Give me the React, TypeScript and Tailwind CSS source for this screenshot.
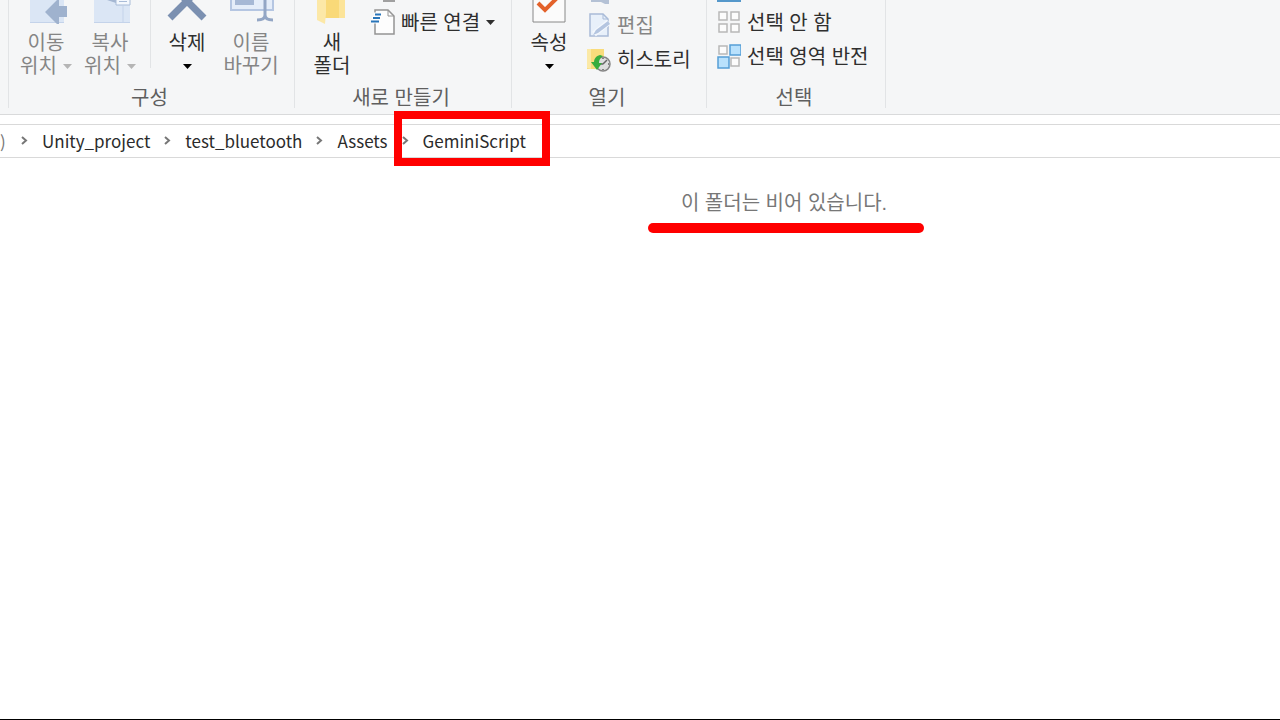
import type { ReactNode } from 'react'

interface BigButtonProps {
  icon: ReactNode
  lines: string[]
  arrow?: boolean
  disabled?: boolean
}

interface RowButtonProps {
  icon: ReactNode
  label: string
  arrow?: boolean
  disabled?: boolean
}

interface GroupProps {
  label: string
  width: string
  children: ReactNode
}

const path = ['Unity_project', 'test_bluetooth', 'Assets', 'GeminiScript']

function Caret() {
  return (
    <svg className="shrink-0" width="9" height="5" viewBox="0 0 9 5" fill="currentColor" aria-hidden="true">
      <path d="M0 0h9L4.5 5z" />
    </svg>
  )
}

function Chevron() {
  return (
    <svg className="shrink-0" width="7" height="9" viewBox="0 0 7 9" fill="none" stroke="#777" strokeWidth="2" aria-hidden="true">
      <path d="M1 1l4 3.5L1 8" />
    </svg>
  )
}

/* Large command: icon on top, one or two text lines below */
function BigButton({ icon, lines, arrow, disabled }: BigButtonProps) {
  const tone = disabled ? 'text-[#858585]' : 'text-[#2f2f2f]'
  return (
    <button type="button" disabled={disabled} className={`flex w-16 shrink-0 flex-col items-center ${tone}`}>
      <span className="mb-2 block h-6">{icon}</span>
      <span className="block h-[23px] whitespace-nowrap">{lines[0]}</span>
      <span className="flex h-[23px] items-center justify-center gap-1.5 whitespace-nowrap">
        {lines[1]}
        {arrow && (
          <span className={`flex h-5 items-center ${disabled ? 'text-[#b5b5b5]' : 'text-black'}`}>
            <Caret />
          </span>
        )}
      </span>
    </button>
  )
}

/* Small command: icon and text on one row */
function RowButton({ icon, label, arrow, disabled }: RowButtonProps) {
  const tone = disabled ? 'text-[#858585]' : 'text-[#2f2f2f]'
  return (
    <button type="button" disabled={disabled} className={`flex h-[34px] items-center gap-1.5 whitespace-nowrap ${tone}`}>
      {icon}
      <span className="pt-0.5">{label}</span>
      {arrow && <Caret />}
    </button>
  )
}

function Group({ label, width, children }: GroupProps) {
  return (
    <section aria-label={label} className={`flex h-[108px] shrink-0 flex-col border-r border-[#e2e4e6] ${width}`}>
      <div className="flex h-[87px] shrink-0 items-start pl-[5px]">{children}</div>
      <p className="pr-1 text-center text-[#5f5f5f]">{label}</p>
    </section>
  )
}

function MoveIcon() {
  return (
    <svg width="42" height="24" viewBox="0 0 42 24" aria-hidden="true">
      <path d="M5 0h34v23H5z" fill="#dbe6f5" />
      <path d="M5 22.5h34" stroke="#c4d3ea" />
      <path d="M20 12L32 0h2v6h12v11H34v7h-2z" fill="#9fb2ce" />
    </svg>
  )
}

function CopyIcon() {
  return (
    <svg width="42" height="24" viewBox="0 0 42 24" aria-hidden="true">
      <path d="M5 0h36v23H5z" fill="#dbe6f5" />
      <path d="M5 22.5h36M34 6v16" stroke="#c4d3ea" fill="none" />
      <path d="M18 0h9v3z" fill="#a5b7d2" />
      <path d="M27 -2h14v7H27z" fill="#f4f8fd" stroke="#a9bcd8" />
      <path d="M30 1.5h8" stroke="#a9bcd8" />
    </svg>
  )
}

function DeleteIcon() {
  return (
    <svg width="42" height="24" viewBox="0 0 42 24" aria-hidden="true">
      <path d="M4 18L25 -3M38 18L17 -3" stroke="#7b90b1" strokeWidth="7" />
    </svg>
  )
}

function RenameIcon() {
  return (
    <svg width="46" height="24" viewBox="0 0 46 24" fill="none" aria-hidden="true">
      <path d="M3 -2h42v12H3z" fill="#e5edf9" stroke="#b5c6e2" strokeWidth="2" />
      <path d="M7 0h19v5H7z" fill="#a6b8d5" />
      <path d="M37 -2v18M29 20c5 0 8-1 8-5 0 4 3 5 8 5" stroke="#93a6c5" strokeWidth="3" />
    </svg>
  )
}

function FolderIcon() {
  return (
    <svg width="32" height="24" viewBox="0 0 32 24" aria-hidden="true">
      <path d="M9 0h20v18H9z" fill="#f9d978" />
      <path d="M23 0h6v18h-6z" fill="#fce499" />
      <path d="M1 0h9v13l-1 11-8-4z" fill="#fce8a7" />
    </svg>
  )
}

function PropertiesIcon() {
  return (
    <svg width="34" height="24" viewBox="0 0 34 24" fill="none" aria-hidden="true">
      <path d="M1 -2h32v24H1z" fill="#fbfbfb" stroke="#888" />
      <path d="M6 3l7 7L25 -2" stroke="#e3622b" strokeWidth="4" />
    </svg>
  )
}

function ShortcutIcon() {
  return (
    <svg className="shrink-0" width="24" height="26" viewBox="0 0 24 26" fill="none" aria-hidden="true">
      <path d="M4 1h13l6 6v18H4z" fill="#fdfdfd" stroke="#949494" strokeWidth="1.5" />
      <path d="M17 1v6h6" stroke="#949494" />
      <path d="M3 5.5h8M1 9h8M0 12.5h8" stroke="#fdfdfd" strokeWidth="4" />
      <path d="M4 5.5h6M2 9h7M0 12.5h8" stroke="#2875b9" strokeWidth="2" />
    </svg>
  )
}

function EditIcon() {
  return (
    <svg className="shrink-0" width="24" height="26" viewBox="0 0 24 26" fill="none" aria-hidden="true">
      <path d="M3 2h13l5 5v17H3z" fill="#e8f0fa" stroke="#a9bbd8" strokeWidth="1.5" />
      <path d="M16 2v5h5" stroke="#a9bbd8" />
      <path d="M7 22L22 10" stroke="#f4f8fd" strokeWidth="6" />
      <path d="M6 23l3-5L21 9l2 3-12 9z" fill="#b4c5e0" />
    </svg>
  )
}

function HistoryIcon() {
  return (
    <svg className="shrink-0" width="24" height="26" viewBox="0 0 24 26" fill="none" aria-hidden="true">
      <path d="M0 3h17v20H0z" fill="#f9dc7c" />
      <path d="M0 3h4v20l-4-1z" fill="#fbe9a6" />
      <circle cx="16" cy="18" r="7" fill="#dedede" stroke="#858585" strokeWidth="1.5" />
      <path d="M16 18l4-4M16 18h-4M16 12v1M16 23v1M21 18h1" stroke="#666" strokeWidth="1.5" />
      <path d="M13 9c-4 1-6 4-6 7H4l6 8 5-7h-3c0-3 1-5 4-7z" fill="#38ad3e" />
    </svg>
  )
}

function SelectNoneIcon() {
  return (
    <svg className="shrink-0" width="24" height="24" viewBox="0 0 24 24" fill="#fcfcfc" stroke="#b8b8b8" strokeWidth="1.5" aria-hidden="true">
      <path d="M2 2h8v8H2zM14 2h8v8h-8zM2 14h8v8H2zM14 14h8v8h-8z" />
    </svg>
  )
}

function InvertIcon() {
  return (
    <svg className="shrink-0" width="24" height="26" viewBox="0 0 24 26" strokeWidth="1.5" aria-hidden="true">
      <path d="M2 3h8v8H2zM14 15h8v8h-8z" fill="#fcfcfc" stroke="#b8b8b8" />
      <path d="M13 2h11v10H13zM1 14h11v11H1z" fill="#b9e1fc" stroke="#559fd6" />
    </svg>
  )
}

export default function App() {
  return (
    <div className="flex min-h-screen flex-col overflow-x-hidden border-b border-black bg-white font-['Liberation_Sans','Noto_Sans_CJK_KR',sans-serif] text-[20px] leading-[23px]">
      {/* Ribbon */}
      <header className="flex h-[115px] border-b border-[#d9dadb] bg-[#f5f6f7]">
        <div className="h-[108px] w-[9px] shrink-0 border-r border-[#e2e4e6]" />
        <Group label="구성" width="w-[286px]">
          <BigButton icon={<MoveIcon />} lines={['이동', '위치']} arrow disabled />
          <BigButton icon={<CopyIcon />} lines={['복사', '위치']} arrow disabled />
          <div className="mr-1 ml-2 h-[68px] w-px shrink-0 bg-[#e2e4e6]" />
          <BigButton icon={<DeleteIcon />} lines={['삭제', '']} arrow />
          <BigButton icon={<RenameIcon />} lines={['이름', '바꾸기']} disabled />
        </Group>
        <Group label="새로 만들기" width="w-[217px]">
          <BigButton icon={<FolderIcon />} lines={['새', '폴더']} />
          <div className="ml-[7px]">
            <div className="flex h-[5px] items-start pl-3">
              <div className="h-0.5 w-3 bg-[#a0a0a0]" />
            </div>
            <RowButton icon={<ShortcutIcon />} label="빠른 연결" arrow />
          </div>
        </Group>
        <Group label="열기" width="w-[195px]">
          <BigButton icon={<PropertiesIcon />} lines={['속성', '']} arrow />
          <div className="ml-1.5">
            <div className="flex h-2 items-start pl-1">
              <svg width="18" height="4" viewBox="0 0 18 4" fill="#b4c1d5" aria-hidden="true">
                <path d="M0 0h18v4h-4l-4-2H0z" />
              </svg>
            </div>
            <RowButton icon={<EditIcon />} label="편집" disabled />
            <RowButton icon={<HistoryIcon />} label="히스토리" />
          </div>
        </Group>
        <Group label="선택" width="w-[179px]">
          <div className="ml-[5px]">
            <div className="flex h-[5px] items-start">
              <div className="h-0.5 w-6 bg-[#5598cb]" />
            </div>
            <RowButton icon={<SelectNoneIcon />} label="선택 안 함" />
            <RowButton icon={<InvertIcon />} label="선택 영역 반전" />
          </div>
        </Group>
      </header>

      {/* Address bar */}
      <nav aria-label="경로" className="mt-[9px] flex h-[34px] items-center border-y border-[#d9d9d9] pb-0.5 font-['Noto_Sans_CJK_KR',sans-serif] text-[17px] text-[#2b2b2b]">
        <span className="w-[21px] text-[#777]">)</span>
        <ol className="flex items-center">
          {path.map((name, i) => (
            <li key={name} className="relative flex items-center gap-3.5 pr-3.5">
              <Chevron />
              <a href="#">{name}</a>
              {i === path.length - 1 && (
                <span className="pointer-events-none absolute -top-[18px] -right-2.5 -left-2 h-[55px] border-8 border-[#ff0000]" />
              )}
            </li>
          ))}
        </ol>
      </nav>

      {/* Empty folder notice */}
      <main className="flex flex-col items-center pt-[34px] pl-[292px]">
        <p className="pr-1 text-[#777]">이 폴더는 비어 있습니다.</p>
        <div className="mt-2 h-2.5 w-[276px] rounded-full bg-[#ff0000]" />
      </main>
    </div>
  )
}
